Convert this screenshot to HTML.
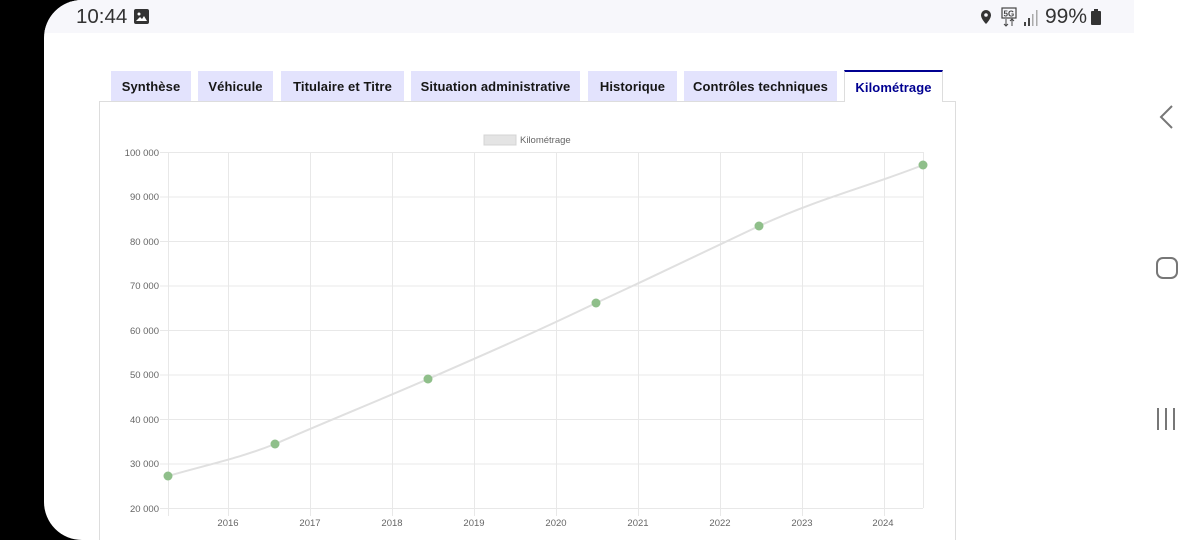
<!DOCTYPE html>
<html><head><meta charset="utf-8"><style>
html,body{margin:0;padding:0;width:1200px;height:540px;overflow:hidden;background:#000;font-family:"Liberation Sans",sans-serif}
.screen{position:absolute;left:44px;top:0;width:1156px;height:540px;background:#fff;border-radius:38px 0 0 38px;overflow:hidden}
.status{position:absolute;left:0;top:0;width:1090px;height:33px;background:#f7f7fb}
.tab{position:absolute;top:71px;height:30px;background:#e3e3fd;color:#161616;font-weight:bold;font-size:13px;line-height:31px;text-align:center;white-space:nowrap;font-family:"Liberation Sans",sans-serif;letter-spacing:0.1px}
</style></head><body>
<div class="screen">
 <div class="status"></div>
 <div style="position:absolute;left:32px;top:5px;font-size:20.5px;color:#333">10:44</div>
 <div style="position:absolute;left:90px;top:9px;width:15px;height:15px;background:#333;border-radius:2px"><svg width="15" height="15"><circle cx="5" cy="5" r="1.5" fill="#fff"/><path d="M2 12 L6 8 L8 10 L10 7 L13 12Z" fill="#fff"/></svg></div>
 <svg style="position:absolute;left:935px;top:7px" width="120" height="22">
  <path d="M7 3a5 5 0 0 1 5 5c0 4-5 9-5 9s-5-5-5-9a5 5 0 0 1 5-5z" fill="#333"/><circle cx="7" cy="8" r="1.8" fill="#f7f7fb"/>
  <rect x="23" y="1" width="14" height="10" fill="none" stroke="#444" stroke-width="1.2"/><text x="24.5" y="9.5" font-size="8" fill="#444" font-weight="bold">5G</text>
  <path d="M27 12v7M25 17l2 2 2-2M33 19v-7M31 14l2-2 2 2" stroke="#444" fill="none" stroke-width="1"/>
  <rect x="45" y="15" width="2" height="4" fill="#444"/><rect x="49" y="11" width="2" height="8" fill="#444"/><rect x="53" y="7" width="1.5" height="12" fill="#aaa"/><rect x="57" y="3" width="1.5" height="16" fill="#aaa"/>
 </svg>
 <div style="position:absolute;left:1001px;top:5px;font-size:21px;color:#333">99%</div>
 <div style="position:absolute;left:1047px;top:11px;width:10px;height:14px;background:#333;border-radius:1px"></div><div style="position:absolute;left:1050px;top:9px;width:4px;height:3px;background:#333"></div>
 <svg style="position:absolute;left:1100px;top:100px" width="56" height="340">
  <path d="M28 6 L17 17 L28 28" fill="none" stroke="#777" stroke-width="2"/>
  <rect x="13" y="158" width="20" height="20" rx="6" fill="none" stroke="#777" stroke-width="2"/>
  <path d="M14 308v22M22 308v22M30 308v22" stroke="#777" stroke-width="2"/>
 </svg>

 <div style="position:absolute;left:55px;top:101px;width:857px;height:460px;border:1px solid #ddd;box-sizing:border-box"></div>
 <div class="tab" style="left:67px;width:80px">Synthèse</div>
 <div class="tab" style="left:154px;width:75px">Véhicule</div>
 <div class="tab" style="left:237px;width:123px">Titulaire et Titre</div>
 <div class="tab" style="left:367px;width:169px">Situation administrative</div>
 <div class="tab" style="left:544px;width:89px">Historique</div>
 <div class="tab" style="left:640px;width:153px">Contrôles techniques</div>
 <div class="tab" style="left:800px;width:99px;background:#fff;color:#000091;border-top:2px solid #000091;top:70px;height:32px;border-left:1px solid #ddd;border-right:1px solid #ddd;box-sizing:border-box;line-height:31px">Kilométrage</div>

 <svg style="position:absolute;left:-44px;top:0" width="1200" height="540" font-family="Liberation Sans, sans-serif">
  <rect x="484" y="135" width="32" height="10" fill="#e4e4e4" stroke="#d4d4d4"/>
  <text x="520" y="143" font-size="9.5" fill="#666">Kilométrage</text>
  <g stroke="#e8e8e8" stroke-width="1">
   <path d="M160 152.5H923M160 197H923M160 241.5H923M160 286H923M160 330.5H923M160 375H923M160 419.5H923M160 464H923M160 508.5H923"/>
   <path d="M168.5 152V516M228.5 152V516M310.5 152V516M392.5 152V516M474.5 152V516M556.5 152V516M638.5 152V516M720.5 152V516M802.5 152V516M884.5 152V516M923.5 152V508"/>
  </g>
  <g font-size="9.5" fill="#666" text-anchor="end">
   <text x="159" y="156">100 000</text><text x="159" y="200">90 000</text><text x="159" y="245">80 000</text><text x="159" y="289">70 000</text><text x="159" y="334">60 000</text><text x="159" y="378">50 000</text><text x="159" y="423">40 000</text><text x="159" y="467">30 000</text><text x="159" y="512">20 000</text>
  </g>
  <g font-size="9.5" fill="#666" text-anchor="middle">
   <text x="228" y="526">2016</text><text x="310" y="526">2017</text><text x="392" y="526">2018</text><text x="474" y="526">2019</text><text x="556" y="526">2020</text><text x="638" y="526">2021</text><text x="720" y="526">2022</text><text x="802" y="526">2023</text><text x="883" y="526">2024</text>
  </g>
  <path d="M168 476 C210 464 240 458 275 444 C330 420 380 400 428 379 C490 352 540 330 596 303 C650 278 700 254 759 226 C820 198 870 186 923 165" fill="none" stroke="#e0e0e0" stroke-width="2"/>
  <g fill="#8fbf8a"><circle cx="168" cy="476" r="4.5"/><circle cx="275" cy="444" r="4.5"/><circle cx="428" cy="379" r="4.5"/><circle cx="596" cy="303" r="4.5"/><circle cx="759" cy="226" r="4.5"/><circle cx="923" cy="165" r="4.5"/></g>
 </svg>
</div>
</body></html>
